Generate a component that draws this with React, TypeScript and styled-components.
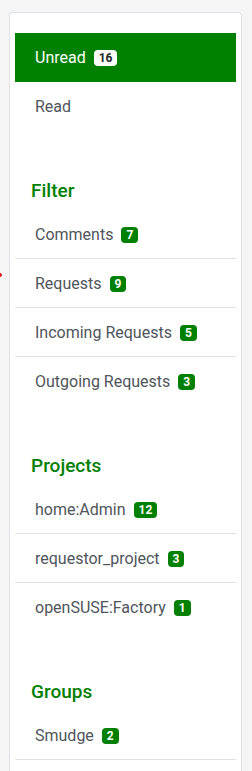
import React from "react";
import styled, { createGlobalStyle } from "styled-components";

const GlobalStyle = createGlobalStyle`
  html, body {
    margin: 0;
    padding: 0;
    background-color: #f5f5f5;
    font-family: Roboto, "Liberation Sans", sans-serif;
  }
`;

const Page = styled.div`
  position: relative;
  padding: 12px 10px 0 9px;
`;

const EdgeMarker = styled.span`
  position: absolute;
  left: -3px;
  top: 273px;
  width: 5px;
  height: 4px;
  border-radius: 2px;
  background-color: #e8191d;
`;

const Card = styled.aside`
  box-sizing: border-box;
  min-height: calc(100vh - 12px);
  background-color: #fff;
  border: 1px solid #dee2e6;
  border-bottom: none;
  border-radius: 4px 4px 0 0;
  padding: 20px 5px 0;
`;

const Section = styled.section`
  & + & {
    margin-top: 48px;
  }
`;

const Heading = styled.h5`
  margin: 0 0 7px;
  padding: 0 16px;
  font-size: 19px;
  line-height: 24px;
  font-weight: 500;
  color: #008000;
`;

const List = styled.ul<{ $open?: boolean }>`
  list-style: none;
  margin: 0;
  padding: 0;

  & > li:last-child {
    border-bottom-color: ${(p) => (p.$open ? "#dee2e6" : "transparent")};
  }
`;

const Item = styled.li<{ $active?: boolean }>`
  display: flex;
  align-items: center;
  padding: 13px 20px 11px;
  font-size: 16px;
  line-height: 24px;
  color: ${(p) => (p.$active ? "#fff" : "#4f555b")};
  background-color: ${(p) => (p.$active ? "#008000" : "transparent")};
  border-bottom: 1px solid ${(p) => (p.$active ? "#008000" : "#dee2e6")};
`;

const Badge = styled.span<{ $light?: boolean }>`
  margin-left: 8px;
  padding: 1px 5px;
  border-radius: 4px;
  font-size: 12px;
  line-height: 14px;
  font-weight: 700;
  color: ${(p) => (p.$light ? "#212529" : "#fff")};
  background-color: ${(p) => (p.$light ? "#fff" : "#008000")};
`;

type Entry = { label: string; count?: number; active?: boolean };

const sections: { title?: string; open?: boolean; items: Entry[] }[] = [
  {
    items: [{ label: "Unread", count: 16, active: true }, { label: "Read" }],
  },
  {
    title: "Filter",
    items: [
      { label: "Comments", count: 7 },
      { label: "Requests", count: 9 },
      { label: "Incoming Requests", count: 5 },
      { label: "Outgoing Requests", count: 3 },
    ],
  },
  {
    title: "Projects",
    items: [
      { label: "home:Admin", count: 12 },
      { label: "requestor_project", count: 3 },
      { label: "openSUSE:Factory", count: 1 },
    ],
  },
  {
    title: "Groups",
    open: true,
    items: [{ label: "Smudge", count: 2 }],
  },
];

export default function App() {
  return (
    <>
      <GlobalStyle />
      <Page>
        <EdgeMarker />
        <Card>
          {sections.map((section, i) => (
            <Section key={i}>
              {section.title && <Heading>{section.title}</Heading>}
              <List $open={section.open}>
                {section.items.map((item) => (
                  <Item key={item.label} $active={item.active}>
                    {item.label}
                    {item.count !== undefined && (
                      <Badge $light={item.active}>{item.count}</Badge>
                    )}
                  </Item>
                ))}
              </List>
            </Section>
          ))}
        </Card>
      </Page>
    </>
  );
}
